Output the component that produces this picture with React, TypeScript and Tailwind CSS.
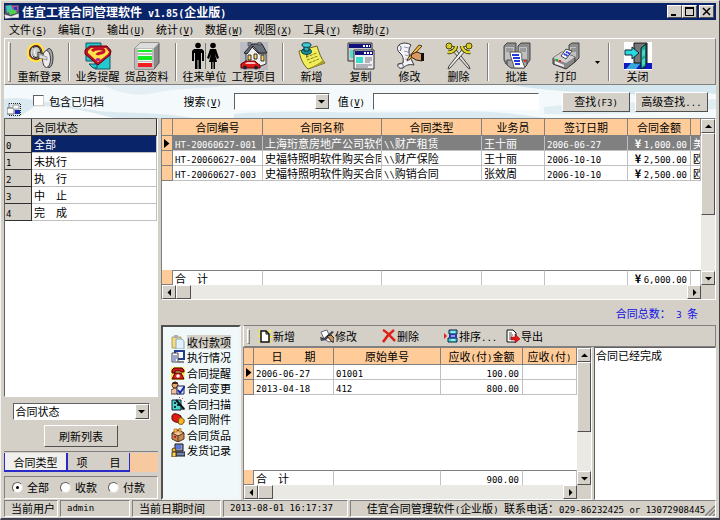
import { useState, type ReactNode } from 'react';
import clsx from 'clsx';

const RAISED = 'border border-t-white border-l-white border-r-[#505050] border-b-[#505050] bg-[#d4d0c8]';
const SUNKEN = 'border border-t-[#606060] border-l-[#606060] border-r-white border-b-white';
const GROOVE = 'border border-t-[#808080] border-l-[#808080] border-r-white border-b-white';

// Latin text and digits, half the width of a Chinese character
function Mono({ children, size = 'text-[9px]' }: { children: ReactNode; size?: string }) {
  return (
    <span className={clsx("font-['DejaVu_Sans_Mono',monospace] leading-none whitespace-pre", size)}>
      {children}
    </span>
  );
}

function Hotkey({ k }: { k: string }) {
  return (
    <Mono>
      (<u>{k}</u>)
    </Mono>
  );
}

function Arrow({ dir }: { dir: 'up' | 'down' | 'left' | 'right' }) {
  const d = {
    up: 'M0 5h7L3.5 1.5z',
    down: 'M0 2h7L3.5 5.5z',
    left: 'M5 0v7L1.5 3.5z',
    right: 'M2 0v7l3.5-3.5z',
  }[dir];
  return (
    <svg width="7" height="7" viewBox="0 0 7 7">
      <path d={d} fill="#000" />
    </svg>
  );
}

function ScrollButton({ dir }: { dir: 'up' | 'down' | 'left' | 'right' }) {
  return (
    <button
      type="button"
      aria-label={dir}
      className={clsx('w-[14px] h-[14px] shrink-0 flex items-center justify-center', RAISED)}
    >
      <Arrow dir={dir} />
    </button>
  );
}

function VScroll({ thumb }: { thumb: string }) {
  return (
    <div className="w-[14px] shrink-0 flex flex-col bg-[#ebe9e4]">
      <ScrollButton dir="up" />
      <div className={clsx(RAISED, thumb)} />
      <div className="flex-1" />
      <ScrollButton dir="down" />
    </div>
  );
}

function HScroll() {
  return (
    <div className="flex h-[14px] shrink-0 bg-[#d4d0c8]">
      <div className="flex-1 flex bg-[#ebe9e4]">
        <ScrollButton dir="left" />
        <div className={clsx('w-[15px]', RAISED)} />
        <div className="flex-1" />
        <ScrollButton dir="right" />
      </div>
      <div className="w-[14px]" />
    </div>
  );
}

/* ---------- toolbar icons ---------- */

const bigIcons: Record<string, ReactNode> = {
  login: (
    <>
      <path d="M9 2c5-1 9 4 8 10-1 5-4 8-8 7-5-1-8-4-7-9 0-4 3-7 7-8z" fill="#f03c18" stroke="#ffe640" strokeWidth="2" />
      <path d="M8 4c4-1 8 2 8 7 0 4-3 7-7 6-4-1-6-4-5-8 .5-3 2-4.500 4-5z" fill="#9a9a9a" stroke="#222" />
      <ellipse cx="10" cy="10" rx="4.500" ry="5.500" fill="#c8c8c8" stroke="#222" />
      <path d="M7 6c-2 2-2 7 0 9M10 7c-2 1-2 5 0 7" fill="none" stroke="#fff" />
      <path d="M12 10l8 3v4l-8-2z" fill="#ccc" stroke="#333" />
      <ellipse cx="23" cy="16" rx="4" ry="9.500" fill="#aaa" stroke="#333" />
      <ellipse cx="20.500" cy="17" rx="4" ry="8.500" fill="#ececec" stroke="#444" />
      <path d="M13 12l8 3v3l-8-2z" fill="#ddd" stroke="#555" strokeWidth=".5" />
    </>
  ),
  remind: (
    <>
      <path d="M2 1h15v18H2zM11 7h15v20H11z" fill="#23c9cf" stroke="#156" />
      <path d="M5 22h8v4H9z" fill="#23c9cf" stroke="#156" />
      <path d="M6 4h17l4 5-1 4-12 10L1 12V8z" fill="#c4122a" stroke="#600" />
      <path d="M7 6h15l3 4-1 2-10 8L4 11V9z" fill="#ffe24a" />
      <path d="M8 9c3-3 12-3 12 0 0 3-6 1-7 4" fill="none" stroke="#c4122a" strokeWidth="3" />
      <ellipse cx="14" cy="17.500" rx="2.500" ry="1.500" fill="#b020a0" />
    </>
  ),
  goods: (
    <>
      <path d="M2 6l5-5h19v20l-5 6H2z" fill="#8a8a8a" stroke="#555" />
      <path d="M2 6l5-5h19l-5 5z" fill="#dcdcdc" />
      <path d="M2 6h19v21H2z" fill="#bcbcbc" />
      <path d="M5 7h14v4H5zM5 13h14v6H5zM5 20h14v5H5z" fill="#f4fff4" />
      <path d="M5 8h14v2H5zM5 14h14v4H5z" fill="#10ea20" />
      <path d="M5 21h14v4H5z" fill="#f02020" />
    </>
  ),
  people: (
    <>
      <circle cx="7" cy="3.500" r="2.800" />
      <path d="M3 7h8l2 2v10h-2v-8h-1v16H7.500v-9h-1v9H4V11H3v8H1V9z" />
      <path d="M14.500 1v26" stroke="#777" />
      <circle cx="22" cy="3.500" r="2.800" />
      <path d="M19 7h6l3 9-2 1-2-5 2 8h-2v7h-1.500v-7h-1v7H20v-7h-2l2-8-2 5-2-1z" />
    </>
  ),
  house: (
    <>
      <path d="M0 0h28v28H0z" fill="#bcbcc4" />
      <path d="M6 11L12 5l7 7h7v10l-8 3H6z" fill="#f0f0f0" stroke="#333" />
      <path d="M4 11l8-9 10 0 5 9h-8l-6-7-6 8z" fill="#68707c" stroke="#222" />
      <path d="M8 0h3v4H8zM18 0h3v3h-3z" fill="#889" stroke="#333" strokeWidth=".5" />
      <path d="M8 13h3v5H8zM14 12h3v5h-3zM21 13h3v6h-3z" fill="#ffd860" stroke="#333" />
      <path d="M1 22l5-3h9l3 3 2 1v3H1z" fill="#e01818" stroke="#600" />
      <path d="M7 20h7l2 2H5z" fill="#fbb" />
      <circle cx="5" cy="25.500" r="2" fill="#222" />
      <circle cx="16" cy="25.500" r="2" fill="#222" />
    </>
  ),
  add: (
    <>
      <path d="M1 9l18-5c2 6 4 13 8 17L10 27C5 23 2 15 1 9z" fill="#f2ee5a" stroke="#66601c" />
      <path d="M10 27l17-6-2-3-4 3z" fill="#a8a030" />
      <path d="M8 15l11-4M9 18l11-4M11 21l10-4" stroke="#857c24" strokeDasharray="3 1" />
      <path d="M7 8h3l-1 9z" fill="#555" />
      <ellipse cx="8.500" cy="9.500" rx="5" ry="2.800" fill="#1d8f96" stroke="#034" />
      <path d="M6 3h5v6H6z" fill="#2bb0b4" stroke="#034" />
      <ellipse cx="8.500" cy="3" rx="4.500" ry="2.300" fill="#41ccd0" stroke="#034" />
    </>
  ),
  copy: (
    <>
      <path d="M1 1h24v18H1z" fill="#ccc" stroke="#333" />
      <path d="M2 2h22v4H2z" fill="#12107c" />
      <path d="M3 8h7v8H3z" fill="#5ad8c8" />
      <path d="M16 3h2v2h-2zM19 3h2v2h-2zM22 3h1v2h-1z" fill="#fff" />
      <path d="M7 8h20v19H7z" fill="#eee" stroke="#333" />
      <path d="M8 9h18v4H8z" fill="#12107c" />
      <path d="M17 10h2v2h-2zM20 10h2v2h-2zM23 10h2v2h-2z" fill="#fff" />
      <path d="M9 15h7v6H9z" fill="#3cdccc" />
      <path d="M18 16h7M18 18h7M18 20h5M9 23h16M9 25h12" stroke="#778" />
    </>
  ),
  edit: (
    <>
      <path d="M3 3c3-3 10-2 12 0-2 3-3 7-1 12l4 8c-5-1-8 0-11 3-3 1-6-1-5-4l5-1c1-6-1-8-4-11-2-2-2-5 0-7z" fill="#f3f3fb" stroke="#333" />
      <path d="M3 3c2 1 3 3 1 6M3 22c3-1 5 0 4 4" fill="none" stroke="#556" />
      <path d="M8 5l5 1M8 9l4 1M9 13l4 1M9 17l5 1" stroke="#99a" />
      <path d="M12 16L23 3l3 1-12 13-3 2z" fill="#f0c030" stroke="#532" />
      <path d="M16 12l5-2 5 2v7l-6-1-5-3z" fill="#d99a66" stroke="#321" />
      <path d="M25 11h3v8h-3z" fill="#111" />
    </>
  ),
  del: (
    <>
      <path d="M5 6l18 20 2 1-1-3L8 4z" fill="#ddd" stroke="#444" />
      <path d="M23 6L5 26l-2 1 1-3L20 4z" fill="#eee" stroke="#444" />
      <path d="M3 10c3 1 8-2 8-6M25 10c-3 1-8-2-8-6" fill="none" stroke="#4a4406" strokeWidth="4" />
      <path d="M3 10c3 1 8-2 8-6M25 10c-3 1-8-2-8-6" fill="none" stroke="#e6dc30" strokeWidth="2" />
      <circle cx="4" cy="4" r="3" fill="#d8cc28" stroke="#4a4406" />
      <circle cx="24" cy="4" r="3" fill="#d8cc28" stroke="#4a4406" />
    </>
  ),
  approve: (
    <>
      <path d="M1 4l3-3h9v15l-2 6H3l-2-4zM15 4l3-3h9v17l-3 4h-9z" fill="#8e8e8e" stroke="#444" />
      <path d="M2 5h9v13H2zM16 5h8v14h-8z" fill="#c0c0c0" />
      <path d="M3 7h7M3 9h7M17 7h6M17 9h6" stroke="#777" />
      <path d="M4 18h20v5l-3 3H8l-4-3z" fill="#a4a4a4" stroke="#444" />
      <path d="M7 10h10c3 2 1 4 2 8l3 8H11c0-5-4-10-4-16z" fill="#fff" stroke="#555" />
      <path d="M9 13h7M10 16h7M11 19h6M12 22h5" stroke="#2438e0" strokeWidth="2" />
      <path d="M21 18h2v2h-2z" fill="#e22" />
    </>
  ),
  print: (
    <>
      <path d="M17 3l3-2h7v15l-4 4h-6z" fill="#8e8e8e" stroke="#444" />
      <path d="M18 5h6v12h-6z" fill="#c0c0c0" />
      <path d="M19 7h5M19 9h5" stroke="#666" />
      <path d="M1 16l9-6 13 5v5l-9 7L1 22z" fill="#888" stroke="#333" />
      <path d="M1 16l9-6 13 5-9 6z" fill="#cfcfcf" />
      <path d="M9 14l5-7 6 2-6 8z" fill="#fff" stroke="#444" />
      <path d="M12 13l4-4M14 14l4-4" stroke="#2438e0" strokeWidth="2" strokeDasharray="2 1" />
      <path d="M3 19l9 4v2l-9-3z" fill="#eee" />
      <path d="M4 17h2v2H4z" fill="#1b1" />
      <path d="M7 18h2v2H7z" fill="#e22" />
    </>
  ),
  close: (
    <>
      <path d="M0 0h28v28H0z" fill="#fff" />
      <path d="M0 21h28v6H0z" fill="#1018c0" />
      <path d="M7 21h10l-5 6H2z" fill="#35a8d8" />
      <path d="M10 1h13v20H10z" fill="#777" stroke="#111" />
      <path d="M17 6l5-4v22l-5 3z" fill="#23a79f" stroke="#022" />
      <path d="M18 9l3-2v6l-3 2zM18 18l3-2v6l-3 2z" fill="#52d2c8" />
      <path d="M1 8h7V5l7 6-7 6v-4H1z" fill="#28d8e0" stroke="#123" />
    </>
  ),
};

const smallIcons: Record<string, ReactNode> = {
  paste: (
    <>
      <path d="M1 2h9v11H1z" fill="#f3dc7c" stroke="#b4a060" />
      <path d="M3 0h4v3H3z" fill="#aab" />
      <path d="M5 4h6l2 2v8H5z" fill="#e4f2ff" stroke="#8ab" />
    </>
  ),
  screens: (
    <>
      <path d="M4 1h9v8H4z" fill="#f8f8ff" stroke="#223a90" strokeWidth="2" />
      <path d="M1 3h6v9H1z" fill="#fff" stroke="#444" />
      <path d="M2 6h4M2 8h4M2 10h3" stroke="#3448b0" />
      <path d="M7 11h6v2H7z" fill="#888" />
    </>
  ),
  phone: (
    <>
      <path d="M0 2l2-1 5 0 6 0 1 4-1 9H0z" fill="#ffe94c" />
      <path d="M1 7V4l2-2h8l2 2v2h-3V5H4v2z" fill="#d8181c" stroke="#400" />
      <path d="M4 7h6l3 6H1z" fill="#e02020" stroke="#400" />
      <circle cx="7" cy="10" r="1.800" fill="#fff" />
    </>
  ),
  change: (
    <>
      <circle cx="4" cy="4" r="3" fill="#e8a868" stroke="#532" />
      <path d="M1 3c1-3 6-3 6 0z" fill="#421" />
      <path d="M0 9l4-2 3 2v4H0z" fill="#f0c0a0" stroke="#643" />
      <path d="M6 5h7v8H6z" fill="#e8f0ff" stroke="#224" />
      <path d="M7 9l2 3 5-7" fill="none" stroke="#1c2ca8" strokeWidth="2" />
    </>
  ),
  scan: (
    <>
      <path d="M1 3h9v10H1z" fill="#4cd8cc" stroke="#123" />
      <path d="M3 5h2v2H3zM3 9h2v2H3zM6 7h3v2H6z" fill="#134" />
      <path d="M5 3l8 9" stroke="#111" strokeWidth="2" />
      <path d="M11 1h1v1h-1zM8 0h1v1H8zM13 4h1v1h-1z" fill="#d44" />
      <path d="M10 12h4" stroke="#111" />
    </>
  ),
  attach: (
    <>
      <path d="M1 4c1-3 4-3 9 0v6c-4 1-8 0-9-3z" fill="#e01c14" stroke="#500" />
      <path d="M8 6c3-1 6 1 5 4-1 3-4 3-6 1z" fill="#f4b820" stroke="#741" />
    </>
  ),
  box: (
    <>
      <path d="M1 5l6-3 6 3v6l-6 3-6-3z" fill="#c88850" stroke="#532" />
      <path d="M1 5l6 3 6-3-6-3z" fill="#f0c890" stroke="#532" />
      <path d="M7 8v6" stroke="#532" />
      <path d="M3 1h3v3H3zM8 0h2v4H8z" fill="#f0d030" stroke="#a32" strokeWidth=".5" />
      <path d="M3 8h2v2H3z" fill="#b22" />
    </>
  ),
  ship: (
    <>
      <path d="M4 1h8v7H4z" fill="#99a" stroke="#112" />
      <path d="M5 2h5v4H5z" fill="#5878e0" />
      <path d="M5 9h9v4H5z" fill="#7484a4" stroke="#112" />
      <circle cx="3" cy="7" r="2" fill="#f0c020" stroke="#532" />
      <path d="M1 9h4v5H1z" fill="#f0d850" stroke="#532" />
    </>
  ),
  new: (
    <>
      <path d="M0 0l4 3-2 2zM14 0l-4 3 2 2zM0 14l3-4 1 3zM14 14l-3-4-1 3zM0 6h3v2H0zM11 7h3v2h-3z" fill="#f4ee3c" />
      <path d="M3 2h5l3 3v8H3z" fill="#fff" stroke="#111" strokeWidth="1.500" />
      <path d="M8 2v3h3" fill="none" stroke="#111" />
    </>
  ),
  modify: (
    <>
      <path d="M1 3l6-2 2 5 4 6-4 1-5-3z" fill="#fff" stroke="#667" />
      <path d="M0 8l4 1 8-7 2 1-8 8-5 1z" fill="#445" />
      <path d="M7 7l4-1 3 3v4h-2z" fill="#cc9060" stroke="#221" />
    </>
  ),
  cross: <path d="M1 1c4 2 8 7 12 11M12 1C8 4 4 8 1 13" fill="none" stroke="#dc2018" strokeWidth="2.500" />,
  sort: (
    <>
      <path d="M0 4l3 3-3 3z" fill="#e02020" />
      <path d="M5 1h8v4H5zM4 9h9v4H4z" fill="#40d0d8" stroke="#124" />
      <path d="M5 5h8v4H5z" fill="#2838b0" />
      <path d="M7 3h4M7 7h4M7 11h4" stroke="#fff" />
    </>
  ),
  export: (
    <>
      <path d="M1 1h6l3 3v9H1z" fill="#fff" stroke="#111" />
      <path d="M3 4h3M3 6h4M3 8h3M3 10h2" stroke="#555" />
      <path d="M5 8h4V5l5 5-5 4v-3H5z" fill="#e81818" stroke="#700" strokeWidth=".5" />
    </>
  ),
};

function SmallIcon({ name }: { name: string }) {
  return (
    <svg width="14" height="14" viewBox="0 0 14 14" className="shrink-0">
      {smallIcons[name]}
    </svg>
  );
}

function ToolButton({ icon, label }: { icon: string; label: string }) {
  return (
    <button type="button" className="w-[49px] flex flex-col items-center">
      <svg width="28" height="28" viewBox="0 0 28 28">
        {bigIcons[icon]}
      </svg>
      <span className="leading-[12px] whitespace-nowrap">{label}</span>
    </button>
  );
}

function ToolSeparator() {
  return (
    <div className="w-[9px] flex justify-center py-px">
      <div className="w-[2px] border-l border-l-[#808080] border-r border-r-white" />
    </div>
  );
}

/* ---------- data ---------- */

const menus = [
  ['文件', 'S'],
  ['编辑', 'T'],
  ['输出', 'U'],
  ['统计', 'V'],
  ['数据', 'W'],
  ['视图', 'X'],
  ['工具', 'Y'],
  ['帮助', 'Z'],
];

const toolGroups = [
  [['login', '重新登录']],
  [['remind', '业务提醒'], ['goods', '货品资料']],
  [['people', '往来单位'], ['house', '工程项目']],
  [['add', '新增'], ['copy', '复制'], ['edit', '修改'], ['del', '删除']],
  [['approve', '批准'], ['print', '打印']],
  [['close', '关闭']],
];

const statuses = ['全部', '未执行', '执　行', '中　止', '完　成'];

const contracts = [
  { no: 'HT-20060627-001', name: '上海珩意房地产公司软件', type: '财产租赁', staff: '王十丽', date: '2006-06-27', amount: '1,000.00', cur: '美' },
  { no: 'HT-20060627-004', name: '史福特照明软件购买合同', type: '财产保险', staff: '王十丽', date: '2006-10-10', amount: '2,500.00', cur: '欧' },
  { no: 'HT-20060627-003', name: '史福特照明软件购买合同', type: '购销合同', staff: '张效周', date: '2006-10-10', amount: '2,500.00', cur: '欧' },
];

const sections = [
  ['paste', '收付款项'],
  ['screens', '执行情况'],
  ['phone', '合同提醒'],
  ['change', '合同变更'],
  ['scan', '合同扫描'],
  ['attach', '合同附件'],
  ['box', '合同货品'],
  ['ship', '发货记录'],
];

const actions = [
  ['new', '新增'],
  ['modify', '修改'],
  ['cross', '删除'],
  ['sort', '排序'],
  ['export', '导出'],
];

/* ---------- grids ---------- */

const TH = 'h-[17px] p-0 font-normal text-center bg-[#ffcc99] border-r border-b border-[#808080] whitespace-nowrap overflow-hidden';
const TD = 'h-[15px] p-0 pl-[2px] border-r border-b border-[#c0c0c0] whitespace-nowrap overflow-hidden';
const MARK = 'h-[15px] p-0 bg-[#ffcc99] border-r border-b border-[#808080]';
const FOOT = 'h-[15px] p-0 pl-[2px] border-r border-t border-r-[#c0c0c0] border-t-[#808080] whitespace-nowrap';

function RowMark({ active }: { active: boolean }) {
  return (
    <td className={MARK}>
      {active && (
        <svg width="6" height="9" viewBox="0 0 6 9" className="ml-[2px] block">
          <path d="M0 0v9l5.500-4.500z" />
        </svg>
      )}
    </td>
  );
}

function ContractCols() {
  return (
    <colgroup>
      <col className="w-[11px]" />
      <col className="w-[90px]" />
      <col className="w-[119px]" />
      <col className="w-[100px]" />
      <col className="w-[63px]" />
      <col className="w-[83px]" />
      <col className="w-[63px]" />
      <col />
    </colgroup>
  );
}

function ContractGrid() {
  return (
    <div className={clsx('flex flex-col h-[182px] shrink-0 bg-white', GROOVE)}>
      <div className="flex-1 flex min-h-0">
        <div className="flex-1 min-w-0 flex flex-col">
          <table className="w-full table-fixed border-separate border-spacing-0 leading-[14px]">
            <ContractCols />
            <thead>
              <tr>
                <th className={TH} />
                {['合同编号', '合同名称', '合同类型', '业务员', '签订日期', '合同金额', ''].map((h, i) => (
                  <th key={i} className={TH}>
                    {h}
                  </th>
                ))}
              </tr>
            </thead>
            <tbody>
              {contracts.map((c, i) => (
                <tr key={c.no} className={clsx(i === 0 && 'bg-[#808080] text-white')}>
                  <RowMark active={i === 0} />
                  <td className={TD}><Mono>{c.no}</Mono></td>
                  <td className={TD}>{c.name}</td>
                  <td className={TD}><Mono>{'\\\\'}</Mono>{c.type}</td>
                  <td className={TD}>{c.staff}</td>
                  <td className={TD}><Mono>{c.date}</Mono></td>
                  <td className={clsx(TD, 'text-right pr-[3px]')}>
                    <b>¥</b> <Mono>{c.amount}</Mono>
                  </td>
                  <td className={TD}>{c.cur}</td>
                </tr>
              ))}
            </tbody>
          </table>
          <div className="flex-1" />
          <table className="w-full table-fixed border-separate border-spacing-0 leading-[14px]">
            <ContractCols />
            <tbody>
              <tr>
                <td className={MARK} />
                <td className={FOOT}>合　计</td>
                <td className={FOOT} />
                <td className={FOOT} />
                <td className={FOOT} />
                <td className={FOOT} />
                <td className={clsx(FOOT, 'text-right pr-[3px]')}>
                  <b>¥</b> <Mono>6,000.00</Mono>
                </td>
                <td className={FOOT} />
              </tr>
            </tbody>
          </table>
        </div>
        <VScroll thumb="h-[82px]" />
      </div>
      <HScroll />
    </div>
  );
}

function PaymentCols() {
  return (
    <colgroup>
      <col className="w-[10px]" />
      <col className="w-[80px]" />
      <col className="w-[107px]" />
      <col className="w-[82px]" />
      <col />
    </colgroup>
  );
}

function PaymentGrid() {
  const rows = [
    ['2006-06-27', '01001', '100.00'],
    ['2013-04-18', '412', '800.00'],
  ];
  return (
    <div className={clsx('flex-1 min-w-0 flex flex-col bg-white', GROOVE)}>
      <div className="flex-1 flex min-h-0">
        <div className="flex-1 min-w-0 flex flex-col">
          <table className="w-full table-fixed border-separate border-spacing-0 leading-[14px]">
            <PaymentCols />
            <thead>
              <tr>
                <th className={TH} />
                <th className={TH}>日　　期</th>
                <th className={TH}>原始单号</th>
                <th className={TH}>应收<Mono>(</Mono>付<Mono>)</Mono>金额</th>
                <th className={TH}>应收<Mono>(</Mono>付<Mono>)</Mono></th>
              </tr>
            </thead>
            <tbody>
              {rows.map(([date, no, sum], i) => (
                <tr key={date}>
                  <RowMark active={i === 0} />
                  <td className={TD}><Mono>{date}</Mono></td>
                  <td className={TD}><Mono>{no}</Mono></td>
                  <td className={clsx(TD, 'text-right pr-[3px]')}><Mono>{sum}</Mono></td>
                  <td className={TD} />
                </tr>
              ))}
            </tbody>
          </table>
          <div className="flex-1" />
          <table className="w-full table-fixed border-separate border-spacing-0 leading-[14px]">
            <PaymentCols />
            <tbody>
              <tr>
                <td className={MARK} />
                <td className={FOOT}>合　计</td>
                <td className={FOOT} />
                <td className={clsx(FOOT, 'text-right pr-[3px]')}><Mono>900.00</Mono></td>
                <td className={FOOT} />
              </tr>
            </tbody>
          </table>
        </div>
        <VScroll thumb="h-[70px]" />
      </div>
      <HScroll />
    </div>
  );
}

/* ---------- panels ---------- */

function TitleBar() {
  return (
    <div className="h-[17px] shrink-0 flex items-center bg-[#0a246a] text-white pr-[2px]">
      <svg width="16" height="16" viewBox="0 0 16 16" className="mr-[2px]">
        <path d="M1 1h14v13H1z" fill="#556" />
        <path d="M2 2l5-1 2 5-6 3z" fill="#38c8b8" />
        <path d="M8 2h6v5l-5 2z" fill="#c04890" />
        <path d="M4 7l7-2 2 4-7 2z" fill="#50d050" />
        <path d="M0 10l7 2 8-3v5H8l-7 1z" fill="#f0f0f8" stroke="#223" strokeWidth=".5" />
        <path d="M10 3h3v3h-3z" fill="#2038d0" />
      </svg>
      <h1 className="flex-1 text-[12px] leading-[16px] font-bold whitespace-pre">
        佳宜工程合同管理软件<Mono size="text-[10px]"> v1.85(</Mono>企业版<Mono size="text-[10px]">)</Mono>
      </h1>
      <button type="button" aria-label="最小化" className={clsx('w-[15px] h-[13px] flex items-center justify-center', RAISED)}>
        <svg width="9" height="9" viewBox="0 0 9 9"><path d="M1 7h5v2H1z" /></svg>
      </button>
      <button type="button" aria-label="最大化" className={clsx('w-[15px] h-[13px] flex items-center justify-center', RAISED)}>
        <svg width="9" height="9" viewBox="0 0 9 9"><path d="M0 0h9v9H0zM1 2v6h7V2z" fillRule="evenodd" /></svg>
      </button>
      <button type="button" aria-label="关闭" className={clsx('w-[15px] h-[13px] ml-[2px] flex items-center justify-center', RAISED)}>
        <svg width="9" height="9" viewBox="0 0 9 9"><path d="M1 1l7 7M8 1L1 8" stroke="#000" strokeWidth="1.500" /></svg>
      </button>
    </div>
  );
}

function MainToolbar() {
  return (
    <div className="h-[47px] shrink-0 flex items-stretch pl-[3px] pt-[3px] pb-[2px] border border-t-white border-l-white border-r-[#808080] border-b-[#808080]">
      <div className="w-[3px] mr-[4px] border border-t-white border-l-white border-r-[#808080] border-b-[#808080]" />
      {toolGroups.map((group, i) => (
        <div key={i} className="flex">
          {i > 0 && <ToolSeparator />}
          {group.map(([icon, label]) => (
            <ToolButton key={icon} icon={icon} label={label} />
          ))}
          {i === 4 && (
            <button type="button" aria-label="打印选项" className="w-[14px] flex items-center justify-center">
              <svg width="5" height="3" viewBox="0 0 5 3"><path d="M0 0h5L2.500 3z" /></svg>
            </button>
          )}
        </div>
      ))}
    </div>
  );
}

function SearchBar() {
  const [archived, setArchived] = useState(false);
  const input = clsx('h-[17px] bg-white outline-none px-[2px]', SUNKEN);
  return (
    <div className="relative h-[33px] shrink-0 flex items-center bg-[#f4f9fb] pr-[8px] overflow-hidden">
      {/* sky background */}
      <svg className="absolute inset-0 w-full h-full" viewBox="0 0 712 33" preserveAspectRatio="none">
        <path d="M0 14c20-3 30 2 50 4s30 8 60 9 60 2 80 6H0z" fill="#dbeaf1" />
        <path d="M30 22c30-2 50 4 80 11H14z" fill="#f8fbfc" />
        <path d="M100 0h130c-30 4-60 3-80 8s-40-2-50-8z" fill="#e3eff4" />
        <path d="M230 29c60-5 110 0 180-2s90 0 130 6H230z" fill="#dcebf2" />
        <path d="M510 0h202v9c-40-5-70 3-110 0s-70-4-92-9z" fill="#d5e7ef" />
        <path d="M540 22c50-6 100-3 172-8v10c-60 3-110 6-172 5z" fill="#e0edf3" />
      </svg>
      <div className="relative flex-1 flex items-center">
        <svg width="14" height="14" viewBox="0 0 14 14" className="ml-[3px] mt-[16px]">
          <path d="M2 .5h11.500v12H2z" fill="none" stroke="#222" strokeDasharray="1 1" />
          <path d="M0 5h7v6H0z" fill="#fff" stroke="#666" />
          <path d="M6 2h6v4H6z" fill="#fff" stroke="#999" />
          <path d="M8 7h5v4H8z" fill="#1828a8" />
        </svg>
        <label className="flex items-center ml-[12px] leading-[14px] -mt-[2px]">
          <input
            type="checkbox"
            checked={archived}
            onChange={(e) => setArchived(e.target.checked)}
            className="appearance-none w-[11px] h-[11px] mr-[5px] bg-white checked:bg-[#0a246a] border border-t-[#606060] border-l-[#606060] border-r-[#d4d0c8] border-b-[#d4d0c8]"
          />
          包含已归档
        </label>
        <label htmlFor="search" className="ml-auto whitespace-pre">搜索<Hotkey k="V" /></label>
        <div className={clsx('ml-[12px] w-[96px] flex', input)}>
          <input id="search" autoFocus className="w-0 flex-1 outline-none text-[11px]" />
          <button type="button" aria-label="展开" className={clsx('w-[14px] h-[15px] -mr-[2px] flex items-center justify-center', RAISED)}>
            <Arrow dir="down" />
          </button>
        </div>
        <label htmlFor="value" className="ml-[8px] whitespace-pre">值<Hotkey k="V" /></label>
        <input id="value" className={clsx('ml-[8px] w-[166px] text-[11px]', input)} />
        <button type="button" className={clsx('ml-[23px] w-[68px] h-[20px]', RAISED)}>查找<Mono>(F3)</Mono></button>
        <button type="button" className={clsx('ml-[5px] w-[73px] h-[20px]', RAISED)}>高级查找<Mono>...</Mono></button>
      </div>
    </div>
  );
}

function LeftPanel() {
  const [selected, setSelected] = useState(0);
  const [kind, setKind] = useState('全部');
  return (
    <aside className="w-[154px] shrink-0 flex flex-col">
      <div className={clsx('flex-1 bg-white', SUNKEN)}>
        <table className="w-full table-fixed border-separate border-spacing-0 leading-[15px]">
          <colgroup>
            <col className="w-[27px]" />
            <col />
          </colgroup>
          <thead>
            <tr>
              <th className="h-[17px] p-0 bg-[#d4d0c8] border-r border-b border-[#303030]" />
              <th className="h-[17px] p-0 pl-[2px] text-left font-normal bg-[#d4d0c8] border-r border-b border-[#303030]">合同状态</th>
            </tr>
          </thead>
          <tbody>
            {statuses.map((s, i) => (
              <tr key={s} onClick={() => setSelected(i)}>
                <td className="h-[17px] p-0 pl-px bg-[#d4d0c8] border-r border-b border-[#303030]"><Mono>{i}</Mono></td>
                <td
                  className={clsx(
                    'h-[17px] p-0 pl-[2px] border-r border-b border-[#c0c0c0]',
                    selected === i && 'bg-[#0a246a] text-white',
                  )}
                >
                  {s}
                </td>
              </tr>
            ))}
          </tbody>
        </table>
      </div>

      <div className="flex flex-col items-center pt-[6px] pb-[4px] border-b border-[#808080]">
        <div className={clsx('relative w-[137px] h-[17px] bg-white', SUNKEN)}>
          <select aria-label="分类" className="appearance-none w-full h-[15px] pl-[2px] text-[11px] leading-[15px] outline-none block">
            <option>合同状态</option>
            <option>合同类型</option>
          </select>
          <span className={clsx('absolute right-0 top-0 w-[14px] h-[15px] flex items-center justify-center pointer-events-none', RAISED)}>
            <Arrow dir="down" />
          </span>
        </div>
        <button type="button" className={clsx('mt-[5px] w-[74px] h-[22px]', RAISED)}>刷新列表</button>
      </div>

      <div className="flex h-[20px] pt-px">
        <button type="button" className="w-[63px] border border-b-2 border-t-0 border-[#2a2ac8] bg-[#f0efec] leading-[16px]">合同类型</button>
        <button type="button" className="w-[63px] border border-b-2 border-t-0 border-[#2a2ac8] bg-[#d4d0c8] leading-[16px]">项　　目</button>
        <div className="flex-1 bg-[#f6c9a0]" />
      </div>

      <div className="pt-[4px] pb-px">
        <fieldset className={clsx('h-[23px] flex items-center pl-[7px]', GROOVE)}>
          {['全部', '收款', '付款'].map((k) => (
            <label key={k} className="w-[48px] flex items-center whitespace-nowrap">
              <input
                type="radio"
                name="kind"
                checked={kind === k}
                onChange={() => setKind(k)}
                className="appearance-none w-[11px] h-[11px] mr-[4px] rounded-full bg-white border border-t-[#606060] border-l-[#606060] border-r-[#e4e0d8] border-b-[#e4e0d8] flex items-center justify-center checked:before:content-[''] checked:before:w-[3px] checked:before:h-[3px] checked:before:rounded-full checked:before:bg-black"
              />
              {k}
            </label>
          ))}
        </fieldset>
      </div>
    </aside>
  );
}

function DetailPanel() {
  const [section, setSection] = useState('收付款项');
  return (
    <div className="flex-1 min-h-0 flex gap-[2px]">
      <nav className="w-[80px] shrink-0 bg-[#f1f8fa] pl-[8px] pt-[7px] border-2 border-t-[#505050] border-l-[#505050] border-r-[#f4f4f4] border-b-[#f4f4f4]">
        <div className="h-[124px] flex flex-col justify-between items-start">
          {sections.map(([icon, label]) => (
            <button key={icon} type="button" onClick={() => setSection(label)} className="h-[15px] flex items-center gap-[2px] whitespace-nowrap">
              <SmallIcon name={icon} />
              <span className={clsx('leading-[14px]', section === label && 'bg-[#d4d0c8]')}>{label}</span>
            </button>
          ))}
        </div>
      </nav>
      <div className="flex-1 min-w-0 flex flex-col">
        <div className="h-[22px] shrink-0 flex items-center pl-[3px] border border-t-[#808080] border-l-white border-r-[#808080] border-b-[#808080]">
          <div className="w-[3px] h-[15px] mr-[8px] border border-t-white border-l-white border-r-[#808080] border-b-[#808080]" />
          {actions.map(([icon, label]) => (
            <button key={icon} type="button" className="w-[62px] flex items-center gap-px leading-[14px] whitespace-nowrap">
              <SmallIcon name={icon} />
              <span>
                {label}
                {icon === 'sort' && <Mono>...</Mono>}
              </span>
            </button>
          ))}
        </div>
        <div className="flex-1 min-h-0 flex gap-[2px]">
          <PaymentGrid />
          <textarea
            aria-label="备注"
            defaultValue="合同已经完成"
            className={clsx('w-[122px] resize-none outline-none bg-white p-0 pl-px text-[11px] leading-[14px]', SUNKEN)}
          />
        </div>
      </div>
    </div>
  );
}

function StatusBar() {
  const cell = clsx('flex items-center pl-[6px] whitespace-pre', GROOVE);
  return (
    <footer className="h-[17px] shrink-0 flex gap-[2px] leading-[13px]">
      <div className={clsx('w-[54px]', cell)}>当前用户</div>
      <div className={clsx('w-[70px]', cell)}><Mono>admin</Mono></div>
      <div className={clsx('w-[89px]', cell)}>当前日期时间</div>
      <div className={clsx('w-[125px]', cell)}><Mono>2013-08-01 16:17:37</Mono></div>
      <div className={clsx('flex-1 relative justify-center', cell)}>
        <span>
          佳宜合同管理软件<Mono>(</Mono>企业版<Mono>) </Mono>联系电话：<Mono>029-86232425 or 13072908445</Mono>
        </span>
        <svg width="11" height="11" viewBox="0 0 11 11" className="absolute right-0 bottom-0">
          <path d="M1 11L11 1M5 11l6-6M9 11l2-2" stroke="#808080" strokeWidth="1.500" />
        </svg>
      </div>
    </footer>
  );
}

export default function App() {
  return (
    <main className="h-screen flex flex-col overflow-hidden px-[3px] pt-[2px] pb-[1px] bg-[#d4d0c8] border border-t-[#e8e6e2] border-l-[#f4f4f4] border-r-[#404040] border-b-2 border-b-[#404050] text-black text-[11px] font-['Noto_Sans_CJK_SC',sans-serif]">
      <TitleBar />
      <div className="h-[18px] shrink-0 flex items-center pl-[5px]">
        {menus.map(([label, k]) => (
          <button key={k} type="button" className="w-[49px] text-left whitespace-nowrap">
            {label}
            <Hotkey k={k} />
          </button>
        ))}
      </div>
      <MainToolbar />
      <SearchBar />
      <div className="flex-1 min-h-0 flex gap-[3px]">
        <LeftPanel />
        <section className="flex-1 min-w-0 flex flex-col">
          <ContractGrid />
          <p className="h-[25px] shrink-0 pr-[18px] pt-[5px] text-right leading-[17px] text-[#1010e0] whitespace-pre">
            合同总数：<Mono> 3 </Mono>条
          </p>
          <DetailPanel />
        </section>
      </div>
      <StatusBar />
    </main>
  );
}
